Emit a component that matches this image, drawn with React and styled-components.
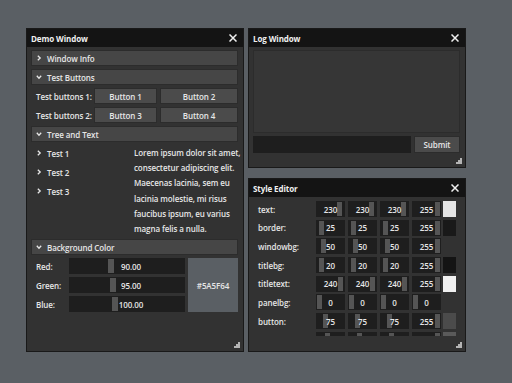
import styled, { createGlobalStyle } from 'styled-components';

const GlobalStyle = createGlobalStyle`
  html, body {
    margin: 0;
    padding: 0;
    background: #5a5f64;
  }
  body {
    width: 512px;
    height: 383px;
    overflow: hidden;
    font-family: "Open Sans", "Noto Sans", sans-serif;
    font-size: 8px;
    font-weight: 600;
    letter-spacing: -0.1px;
    color: #e6e6e6;
  }
`;

const Desktop = styled.div`
  position: relative;
  width: 512px;
  height: 383px;
  background: #5a5f64;
`;

const Window = styled.div`
  position: absolute;
  left: ${p => p.$x}px;
  top: ${p => p.$y}px;
  width: ${p => p.$w}px;
  height: ${p => p.$h}px;
  box-sizing: border-box;
  background: #323232;
  border: 1px solid #191919;
  display: flex;
  flex-direction: column;
`;

const TitleBar = styled.div`
  height: 18px;
  flex: none;
  background: #141414;
  color: #f0f0f0;
  display: flex;
  align-items: center;
  justify-content: space-between;
  padding: 0 6px 0 4px;
  font-weight: 700;
`;

const Body = styled.div`
  display: flex;
  flex-direction: column;
  gap: 3px;
  padding: 3px 5px 0 4px;
`;

const Header = styled.div`
  height: 16px;
  box-sizing: border-box;
  background: #464646;
  border: 1px solid #2c2c2c;
  display: flex;
  align-items: center;
  padding-left: 4px;
  gap: 5px;
`;

const Row = styled.div`
  display: grid;
  grid-template-columns: 60px 63px 1fr;
  gap: 3px;
  height: 16px;
`;

const Label = styled.div`
  display: flex;
  align-items: center;
  padding-left: 5px;
  white-space: nowrap;
`;

const Button = styled.div`
  box-sizing: border-box;
  background: #4b4b4b;
  border: 1px solid #2c2c2c;
  display: flex;
  align-items: center;
  justify-content: center;
`;

const TreeSection = styled.div`
  display: grid;
  grid-template-columns: 103px 1fr;
  height: 91px;
`;

const Tree = styled.div`
  display: flex;
  flex-direction: column;
  gap: 3px;
`;

const TreeNode = styled.div`
  height: 16px;
  display: flex;
  align-items: center;
  gap: 5px;
  padding-left: 5px;
`;

const Lorem = styled.div`
  line-height: 15.2px;
  white-space: nowrap;
`;

const ColorGrid = styled.div`
  display: grid;
  grid-template-columns: 35px 116px 1fr;
  grid-template-rows: repeat(3, 16px);
  gap: 3px;
`;

const Swatch = styled.div`
  grid-column: 3;
  grid-row: 1 / span 3;
  background: #5a5f64;
  display: flex;
  align-items: center;
  justify-content: center;
  color: #e6e6e6;
`;

const SliderFrame = styled.div`
  position: relative;
  background: #1e1e1e;
  width: ${p => p.$w}px;
  height: 16px;
  box-sizing: border-box;
  display: flex;
  align-items: center;
  justify-content: center;
  padding-left: ${p => p.$pad || 0}px;
  overflow: hidden;
`;

const Grab = styled.div`
  position: absolute;
  top: 1px;
  bottom: 1px;
  width: ${p => p.$gw}px;
  background: #555555;
`;

const SliderText = styled.span`
  position: relative;
`;

const LogArea = styled.div`
  height: 83px;
  box-sizing: border-box;
  background: #363636;
  border: 1px solid #2c2c2c;
`;

const InputRow = styled.div`
  display: grid;
  grid-template-columns: 158px 1fr;
  gap: 3px;
  height: 17px;
`;

const Input = styled.div`
  background: #1e1e1e;
`;

const StyleChild = styled.div`
  margin-top: 4px;
  padding-left: 9px;
  height: 135px;
  overflow: hidden;
  display: flex;
  flex-direction: column;
  gap: 2.7px;
`;

const StyleRow = styled.div`
  display: grid;
  grid-template-columns: 55px repeat(4, 29px) 12px;
  column-gap: 3px;
  height: 16px;
  flex: none;
  & > :last-child {
    margin-left: -1px;
  }
`;

const StyleLabel = styled.div`
  display: flex;
  align-items: center;
`;

const ColorBox = styled.div`
  background: ${p => p.$c};
`;

const Grip = styled.svg`
  position: absolute;
  right: 3px;
  bottom: 3px;
`;

const Chevron = ({ open }) => (
  <svg width="6" height="6" viewBox="0 0 6 6">
    {open ? (
      <path d="M0.8 1.8 L3 4.2 L5.2 1.8" fill="none" stroke="#e6e6e6" strokeWidth="1.3" />
    ) : (
      <path d="M1.8 0.8 L4.2 3 L1.8 5.2" fill="none" stroke="#e6e6e6" strokeWidth="1.3" />
    )}
  </svg>
);

const Close = () => (
  <svg width="8" height="8" viewBox="0 0 8 8">
    <path d="M0.5 0.5 L7.5 7.5 M7.5 0.5 L0.5 7.5" stroke="#f0f0f0" strokeWidth="1.5" />
  </svg>
);

const ResizeGrip = () => (
  <Grip width="6" height="6" viewBox="0 0 6 6">
    <g fill="#b4b4b4">
      <rect x="4" y="0" width="2" height="2" />
      <rect x="2" y="2" width="2" height="2" />
      <rect x="4" y="2" width="2" height="2" />
      <rect x="0" y="4" width="2" height="2" />
      <rect x="2" y="4" width="2" height="2" />
      <rect x="4" y="4" width="2" height="2" />
    </g>
  </Grip>
);

const Slider = ({ value, max, w, gw, text, pad }) => {
  const left = 1 + (value / max) * (w - 2 - gw);
  return (
    <SliderFrame $w={w} $pad={pad}>
      <Grab $gw={gw} style={{ left }} />
      {text !== undefined && <SliderText>{text}</SliderText>}
    </SliderFrame>
  );
};

const loremLines = [
  'Lorem ipsum dolor sit amet,',
  'consectetur adipiscing elit.',
  'Maecenas lacinia, sem eu',
  'lacinia molestie, mi risus',
  'faucibus ipsum, eu varius',
  'magna felis a nulla.',
];

const bgRows = [
  ['Red:', 90],
  ['Green:', 95],
  ['Blue:', 100],
];

// last row is scrolled out of view, only the frame tops show
const styleRows = [
  ['text', [230, 230, 230, 255], '#e6e6e6'],
  ['border', [25, 25, 25, 255], '#191919'],
  ['windowbg', [50, 50, 50, 255], '#323232'],
  ['titlebg', [20, 20, 20, 255], '#141414'],
  ['titletext', [240, 240, 240, 255], '#f0f0f0'],
  ['panelbg', [0, 0, 0, 0], 'transparent'],
  ['button', [75, 75, 75, 255], '#4b4b4b'],
  ['', [90, 90, 90, 255], '#5a5a5a', true],
];

const App = () => {
  return (
    <Desktop>
      <GlobalStyle />
      <Window $x={26} $y={28} $w={218} $h={324}>
        <TitleBar>
          <span>Demo Window</span>
          <Close />
        </TitleBar>
        <Body>
          <Header><Chevron /> Window Info</Header>
          <Header><Chevron open /> Test Buttons</Header>
          <Row>
            <Label>Test buttons 1:</Label>
            <Button>Button 1</Button>
            <Button>Button 2</Button>
          </Row>
          <Row>
            <Label>Test buttons 2:</Label>
            <Button>Button 3</Button>
            <Button>Button 4</Button>
          </Row>
          <Header><Chevron open /> Tree and Text</Header>
          <TreeSection>
            <Tree>
              <TreeNode><Chevron /> Test 1</TreeNode>
              <TreeNode><Chevron /> Test 2</TreeNode>
              <TreeNode><Chevron /> Test 3</TreeNode>
            </Tree>
            <Lorem>
              {loremLines.map(l => <div key={l}>{l}</div>)}
            </Lorem>
          </TreeSection>
          <Header><Chevron open /> Background Color</Header>
          <ColorGrid>
            {bgRows.map(([label, v], i) => [
              <Label key={label} style={{ gridRow: i + 1 }}>{label}</Label>,
              <Slider key={label + 's'} value={v} max={255} w={116} gw={6} pad={8} text={v.toFixed(2)} />,
            ])}
            <Swatch>#5A5F64</Swatch>
          </ColorGrid>
        </Body>
        <ResizeGrip />
      </Window>

      <Window $x={248} $y={28} $w={218} $h={140}>
        <TitleBar>
          <span>Log Window</span>
          <Close />
        </TitleBar>
        <Body>
          <LogArea />
          <InputRow>
            <Input />
            <Button>Submit</Button>
          </InputRow>
        </Body>
        <ResizeGrip />
      </Window>

      <Window $x={248} $y={178} $w={218} $h={174}>
        <TitleBar>
          <span>Style Editor</span>
          <Close />
        </TitleBar>
        <StyleChild>
          {styleRows.map(([name, vals, color, hidden]) => (
            <StyleRow key={name || 'hidden'}>
              <StyleLabel>{hidden ? '' : name + ':'}</StyleLabel>
              {vals.map((v, i) => (
                <Slider key={i} value={v} max={255} w={29} gw={5} text={hidden ? undefined : v} />
              ))}
              <ColorBox $c={color} />
            </StyleRow>
          ))}
        </StyleChild>
        <ResizeGrip />
      </Window>
    </Desktop>
  );
};

export default App;
